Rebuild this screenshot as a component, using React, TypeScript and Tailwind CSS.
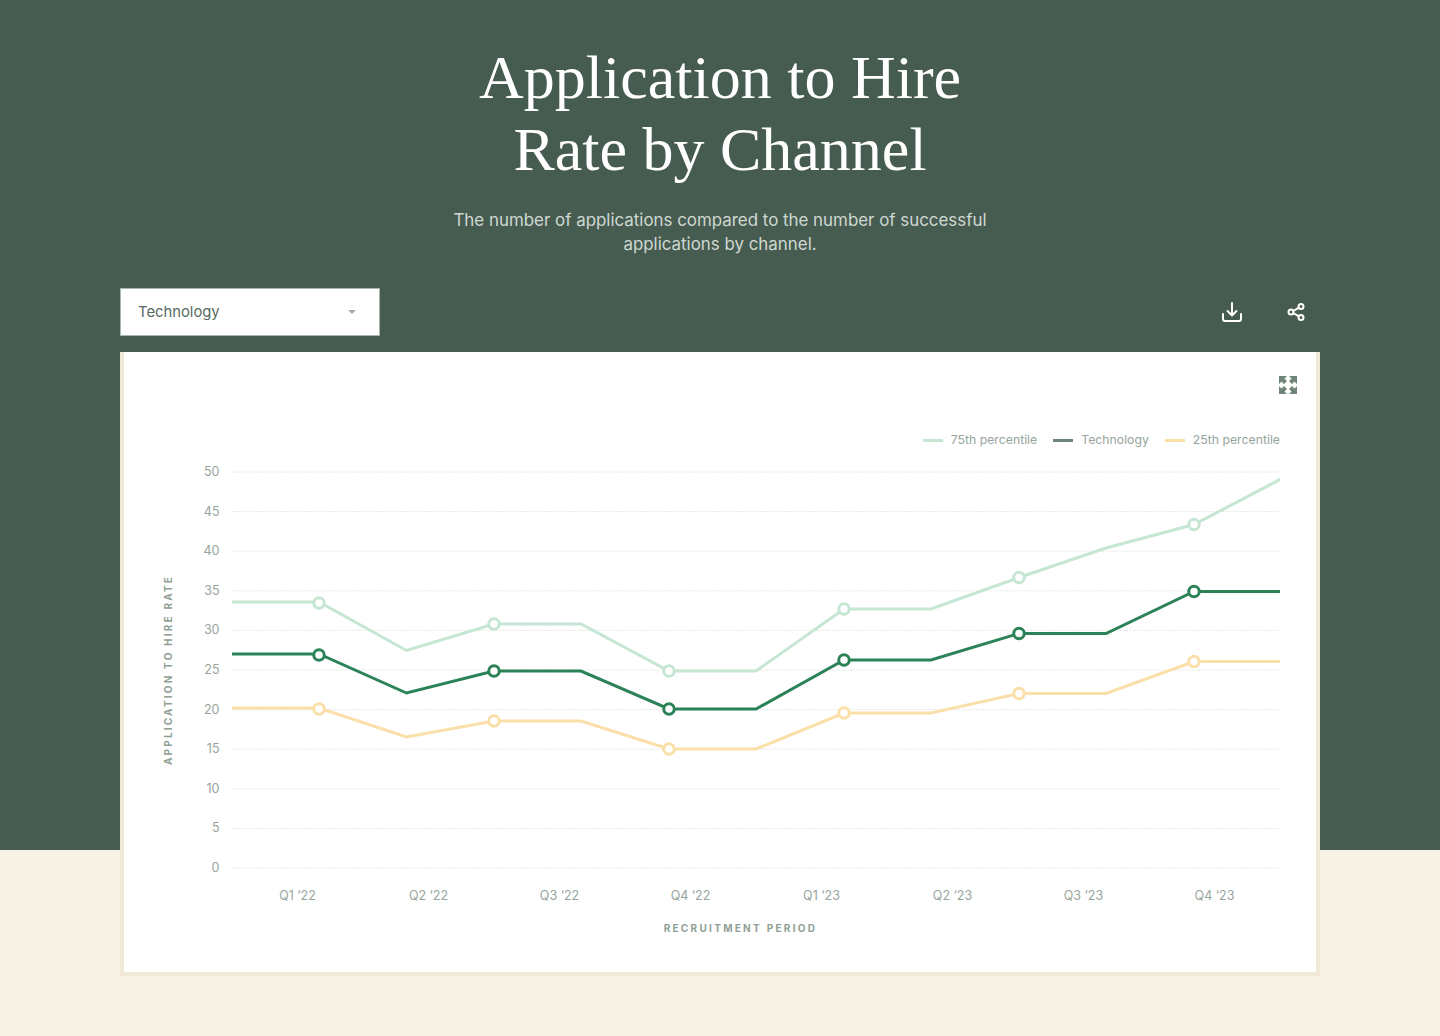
import React from 'react';

const xs = [232, 319, 406.5, 494, 581, 669, 756, 844, 931, 1019, 1106, 1194, 1281];

const series = [
  { color: '#c5e6d3', ys: [602, 602, 650.5, 624, 624, 671, 671, 609, 609, 577.5, 548, 524.5, 479] },
  { color: '#fadfa8', ys: [708, 708, 737, 721, 721, 749, 749, 713, 713, 693.5, 693.5, 661.5, 661.5] },
  { color: '#2c8257', ys: [654, 654, 693, 671, 671, 709, 709, 660, 660, 633.5, 633.5, 591.5, 591.5] },
];

const ticks = [50, 45, 40, 35, 30, 25, 20, 15, 10, 5, 0];
const quarters = ['Q1 ‘22', 'Q2 ‘22', 'Q3 ‘22', 'Q4 ‘22', 'Q1 ‘23', 'Q2 ‘23', 'Q3 ‘23', 'Q4 ‘23'];

function Chart() {
  return (
    <svg viewBox="124 460 1192 490" width={1192} height={490} className="block">
      {ticks.map((t, i) => {
        const y = 472 + i * 39.6;
        return (
          <g key={t}>
            <line x1={232} x2={1280} y1={y} y2={y} stroke="#e8eae6" strokeWidth={1} strokeDasharray="2 1" />
            <text x={219.5} y={y + 4} textAnchor="end" fontSize={12.5} fill="#96a59b">{t}</text>
          </g>
        );
      })}
      {quarters.map((q, i) => (
        <text key={i} x={297.5 + i * 131} y={900} textAnchor="middle" fontSize={12.5} fill="#96a59b">{q}</text>
      ))}
      {series.map((s) => (
        <g key={s.color}>
          <polyline
            points={s.ys.map((y, i) => `${xs[i]},${y}`).join(' ')}
            fill="none"
            stroke={s.color}
            strokeWidth={3}
            clipPath="url(#plot)"
          />
          {s.ys.map((y, i) =>
            i % 2 === 1 ? <circle key={i} cx={xs[i]} cy={i === 1 ? y + 1 : y} r={5.25} fill="#fff" stroke={s.color} strokeWidth={3} /> : null
          )}
        </g>
      ))}
      <defs>
        <clipPath id="plot">
          <rect x={232} y={460} width={1048} height={420} />
        </clipPath>
      </defs>
      <text
        transform="translate(172 670) rotate(-90)"
        textAnchor="middle"
        fontSize={10}
        fontWeight={700}
        letterSpacing={2.2}
        fill="#8f9f95"
      >
        APPLICATION TO HIRE RATE
      </text>
      <text x={740.5} y={932} textAnchor="middle" fontSize={10} fontWeight={700} letterSpacing={2.3} fill="#8f9f95">
        RECRUITMENT PERIOD
      </text>
    </svg>
  );
}

function ExpandIcon() {
  return (
    <svg width="20" height="20" viewBox="0 0 20 20" fill="#6e8577">
      <path d="M1 1h8L6.5 3.5 9 6 6 9 3.5 6.5 1 9z" />
      <path d="M19 1h-8l2.5 2.5L11 6l3 3 2.5-2.5L19 9z" />
      <path d="M1 19h8l-2.5-2.5L9 14l-3-3-2.5 2.5L1 11z" />
      <path d="M19 19h-8l2.5-2.5L11 14l3-3 2.5 2.5L19 11z" />
    </svg>
  );
}

function LegendItem({ color, label }: { color: string; label: string }) {
  return (
    <div className="flex items-center gap-2">
      <span className={`block w-5 h-[3px] ${color}`}></span>
      <span>{label}</span>
    </div>
  );
}

export default function App() {
  return (
    <div className="min-h-[1036px] bg-[linear-gradient(#475c50_850px,#f7f2e6_850px)] font-['Inter',sans-serif]">
      <div className="mx-auto w-[1200px] pt-[41px]">
        <h1 className="text-center text-white font-['Liberation_Serif',serif] text-[62px] leading-[72px]">
          Application to Hire
          <br />
          Rate by Channel
        </h1>
        <p className="mt-[23px] text-center text-[16.9px] leading-[24px] text-[#cfd8d2]">
          The number of applications compared to the number of successful
          <br />
          applications by channel.
        </p>

        <div className="mt-[32px] flex items-center justify-between">
          <div className="flex items-center justify-between w-[260px] h-[48px] px-[17px] bg-white border border-[#a9b8af] text-[14.8px] text-[#566a5f]">
            <span>Technology</span>
            <span className="mr-[6px] w-0 h-0 border-x-[4px] border-x-transparent border-t-[4px] border-t-[#a3aca7]"></span>
          </div>
          <div className="flex items-center gap-[40px] pr-[12px] text-white">
            <svg width="24" height="24" viewBox="0 0 24 24" fill="none" stroke="currentColor" strokeWidth="2" strokeLinecap="round" strokeLinejoin="round">
              <path d="M3 14v5a2 2 0 0 0 2 2h14a2 2 0 0 0 2-2v-5" />
              <path d="M12 3v12M7.5 11l4.5 4.5 4.5-4.5" />
            </svg>
            <svg width="24" height="24" viewBox="0 0 24 24" fill="none" stroke="currentColor" strokeWidth="2" strokeLinecap="round" strokeLinejoin="round">
              <circle cx="17" cy="6.5" r="2.5" />
              <circle cx="7" cy="12" r="2.5" />
              <circle cx="17" cy="17.5" r="2.5" />
              <path d="M9.3 10.8l5.4-3M9.3 13.2l5.4 3" />
            </svg>
          </div>
        </div>

        <div className="mt-[16px] h-[624px] bg-white border-x-4 border-b-4 border-[#f0e9d6]">
          <div className="flex justify-end pt-[23px] pr-[18px]">
            <ExpandIcon />
          </div>
          <div className="mt-[37px] pr-[36px] flex justify-end gap-[16px] text-[12.25px] leading-[16px] text-[#96a59b]">
            <LegendItem color="bg-[#c5e6d3]" label="75th percentile" />
            <LegendItem color="bg-[#6e8577]" label="Technology" />
            <LegendItem color="bg-[#fadfa8]" label="25th percentile" />
          </div>
          <div className="mt-[12px]">
            <Chart />
          </div>
        </div>
      </div>
    </div>
  );
}
